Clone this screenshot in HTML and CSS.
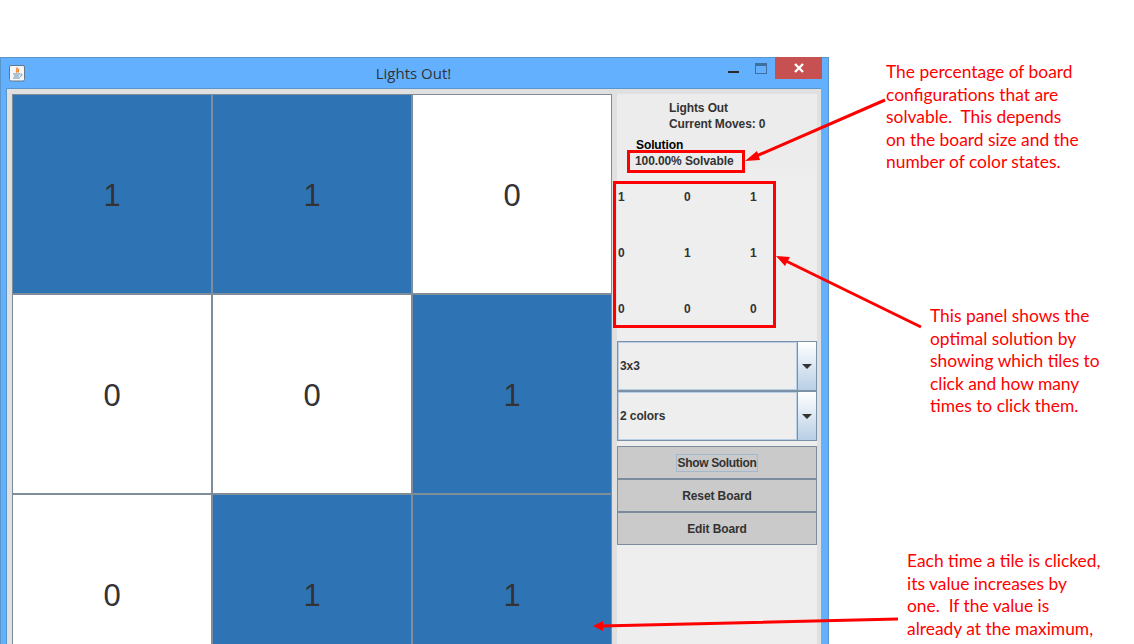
FILE: index.html
```html
<!DOCTYPE html>
<html lang="en">
<head>
<meta charset="utf-8">
<title>Lights Out!</title>
<link rel="stylesheet" href="styles.css">
</head>
<body>
<div class="stage">
  <div class="window">
    <div class="titlebar">
      <svg class="java-icon" width="16" height="17" viewBox="0 0 16 17">
        <rect x="0.5" y="0.5" width="15" height="15.5" rx="1.5" fill="#f4f6f8" stroke="#64788c"/>
        <path d="M8.5 2.5C6.5 4.5 9 5.500 7.200 7.500M10 4C8.500 5 10 6 9 7.500" fill="none" stroke="#e8802a" stroke-width="1.300"/>
        <path d="M4 9h7M5 11h5M4 13h7M11.500 9c2-.5 2 2-.5 2.500" fill="none" stroke="#5f8fb0" stroke-width="1"/>
      </svg>
      <div class="title">Lights Out!</div>
      <div class="controls">
        <span class="ctl-min"></span>
        <span class="ctl-max"></span>
        <span class="ctl-close">
          <svg width="12" height="10" viewBox="0 0 12 10"><path d="M2 1l8 8M10 1l-8 8" stroke="#fff" stroke-width="2.400" fill="none"/></svg>
        </span>
      </div>
    </div>
    <div class="client">
      <div class="board">
        <div class="tile on">1</div>
        <div class="tile on">1</div>
        <div class="tile">0</div>
        <div class="tile">0</div>
        <div class="tile">0</div>
        <div class="tile on">1</div>
        <div class="tile">0</div>
        <div class="tile on">1</div>
        <div class="tile on">1</div>
      </div>
      <div class="side">
        <div class="side-head">
          <div class="info">
            <div>Lights Out</div>
            <div>Current Moves: 0</div>
          </div>
          <div class="status">
            <div class="status-title">Solution</div>
            <div>100.00% Solvable</div>
          </div>
        </div>
        <div class="solution">
          <span>1</span><span>0</span><span>1</span>
          <span>0</span><span>1</span><span>1</span>
          <span>0</span><span>0</span><span>0</span>
        </div>
        <div class="combos">
          <div class="combo"><div class="combo-value">3x3</div><div class="combo-arrow"><i></i></div></div>
          <div class="combo"><div class="combo-value">2 colors</div><div class="combo-arrow"><i></i></div></div>
        </div>
        <div class="buttons">
          <div class="btn"><span class="focus">Show Solution</span></div>
          <div class="btn">Reset Board</div>
          <div class="btn">Edit Board</div>
        </div>
      </div>
    </div>
  </div>

  <div class="box box-solvable"></div>
  <div class="box box-solution"></div>

  <svg class="arrows" width="1134" height="644" viewBox="0 0 1134 644">
    <path d="M885 100L754 157M921 327L784 260M898 619L601 626" fill="none" stroke="#f00" stroke-width="3"/>
    <path d="M745 161L757 151L760 160ZM776 256L790 257L785 266ZM593 626L603 621L603 631Z" fill="#f00"/>
  </svg>

  <p class="note note-a">The percentage of board
configurations that are
solvable.  This depends
on the board size and the
number of color states.</p>
  <p class="note note-b">This panel shows the
optimal solution by
showing which tiles to
click and how many
times to click them.</p>
  <p class="note note-c">Each time a tile is clicked,
its value increases by
one.  If the value is
already at the maximum,</p>
</div>
</body>
</html>
```
FILE: styles.css
```css
* { box-sizing: border-box; }
html, body { margin: 0; padding: 0; background: #fff; }
.stage {
  position: relative;
  width: 1134px;
  height: 644px;
  padding-top: 57px;
  overflow: hidden;
  font-family: "Liberation Sans", Arial, sans-serif;
}
.window {
  width: 829px;
  height: 700px;
  background: #63b0ff;
  border: 1px solid #5a96cc;
  border-bottom: 0;
  padding: 0 7px 0 5px;
}
.titlebar {
  position: relative;
  height: 30px;
  display: flex;
  align-items: center;
  padding-left: 3px;
}
.java-icon { flex: none; margin-top: 1px; }
.title {
  flex: 1;
  text-align: center;
  font-family: "Open Sans", "Noto Sans", sans-serif;
  font-size: 15px;
  color: #333;
  padding-right: 19px;
}
.controls {
  position: absolute;
  top: -1px;
  right: -1px;
  display: flex;
}
.ctl-min {
  position: absolute;
  left: -47px;
  top: 14px;
  width: 11px;
  height: 2px;
  background: #2b2b2b;
}
.ctl-max {
  position: absolute;
  left: -20px;
  top: 6px;
  width: 12px;
  height: 11px;
  border: 1px solid #3f6f9c;
  border-top-width: 3px;
}
.ctl-close {
  width: 47px;
  height: 22px;
  background: #c75050;
  display: flex;
  align-items: center;
  justify-content: center;
}
.client {
  display: flex;
  height: 660px;
  background: #e0e0e0;
  border: 1px solid #5a96cc;
  border-width: 1px 0 0 1px;
  padding: 5px 4px 0 5px;
}
.board {
  flex: none;
  width: 601px;
  display: grid;
  grid-template-columns: repeat(3, 200px);
  grid-auto-rows: 200px;
  align-content: start;
}
.tile {
  display: flex;
  align-items: center;
  justify-content: center;
  padding-top: 4px;
  background: #fff;
  border: 1px solid #7f8c99;
  font-size: 31px;
  color: #333;
}
.tile.on { background: #2e74b5; }
.side {
  flex: none;
  width: 200px;
  margin-left: 4px;
  background: #eeeeee;
  font-size: 12px;
  font-weight: bold;
  color: #333;
  letter-spacing: -0.1px;
}
.side-head {
  height: 75px;
  background: #ececec;
  padding-top: 6px;
}
.info { padding-left: 52px; line-height: 16px; }
.status { padding: 5px 0 0 18px; line-height: 16px; }
.status-title { color: #000; padding-left: 1px; }
.solution {
  display: grid;
  grid-template-columns: repeat(3, 66px);
  grid-auto-rows: 56px;
  align-items: center;
  padding-left: 1px;
}
.combos { margin-top: 4px; }
.combo {
  display: flex;
  height: 50px;
  border: 1px solid #7c91a6;
}
.combo-value {
  flex: 1;
  display: flex;
  align-items: center;
  padding-left: 1px;
  border: 1px solid #b8cfe5;
}
.combo-arrow {
  width: 19px;
  border-left: 1px solid #7c91a6;
  background: linear-gradient(#ffffff, #b8cfe5);
  display: flex;
  align-items: center;
  justify-content: center;
}
.combo-arrow i {
  width: 0;
  height: 0;
  border: 5px solid transparent;
  border-top-color: #333;
  border-bottom: 0;
}
.buttons { margin-top: 5px; }
.btn {
  height: 33px;
  background: #cacaca;
  border: 1px solid #7c8c9c;
  display: flex;
  align-items: center;
  justify-content: center;
}
.focus {
  border: 1px solid #a3b8cc;
  padding: 1px;
  letter-spacing: -0.35px;
}
.box {
  position: absolute;
  border: 3px solid #f00;
}
.box-solvable { left: 627px; top: 150px; width: 118px; height: 23px; }
.box-solution { left: 613px; top: 181px; width: 163px; height: 147px; }
.arrows { position: absolute; left: 0; top: 0; }
.note {
  position: absolute;
  margin: 0;
  font-family: Lato, "Open Sans", sans-serif;
  font-size: 17.4px;
  line-height: 22.5px;
  color: #f00;
  white-space: pre;
}
.note-a { left: 886px; top: 61px; }
.note-b { left: 930px; top: 305px; }
.note-c { left: 907px; top: 550px; }
```
